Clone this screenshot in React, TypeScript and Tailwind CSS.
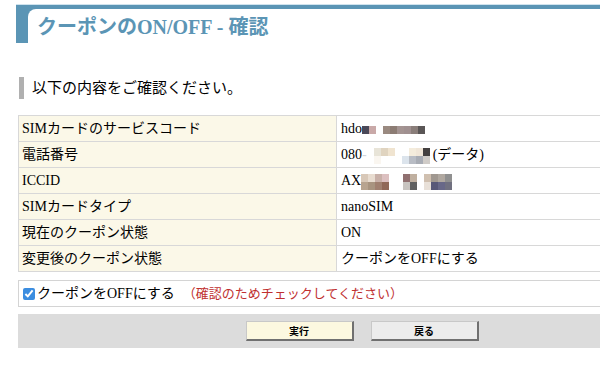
const serif = "font-['Liberation_Serif','Noto_Sans_CJK_JP',serif]";

type Cells = string[][];

function Mosaic({ rows, cell = 7, h = 8 }: { rows: Cells; cell?: number; h?: number }) {
  return (
    <span className="inline-flex flex-col align-middle">
      {rows.map((row, i) => (
        <span key={i} className="flex">
          {row.map((c, j) => (
            <span key={j} style={{ width: cell, height: h, background: c }} />
          ))}
        </span>
      ))}
    </span>
  );
}

const hdoCells: Cells = [
  ["#4a4858", "#c9a9a8", "#ffffff", "#9a8a80", "#8c7c74", "#a49492", "#a09090", "#8a7e7a", "#5a5656"],
];

const phoneCells: Cells = [
  ["#ffffff", "#e8e4d8", "#e0d4c0", "#f0e4d0", "#ffffff", "#ffffff", "#f4ecdc", "#f0e6d8", "#444040"],
  ["#ffffff", "#faf6f0", "#ffffff", "#ffffff", "#ffffff", "#dce4ec", "#b8bcc4", "#a8acb4", "#d0ccc8"],
];

const iccidCells: Cells = [
  ["#d8c8b8", "#e8dcd0", "#c8b0a8", "#dcc0c0", "#ffffff", "#ffffff", "#907070", "#c0b0a0", "#ffffff", "#d0c0b0", "#a09890", "#b0a8a0", "#909090"],
  ["#b8a490", "#a89480", "#a08070", "#906858", "#ffffff", "#ffffff", "#c8c4c0", "#606060", "#ffffff", "#e8e0d8", "#585878", "#686888", "#707080"],
];

const rows: { label: string; value: React.ReactNode }[] = [
  {
    label: "SIMカードのサービスコード",
    value: (
      <>
        hdo
        <Mosaic rows={hdoCells} />
      </>
    ),
  },
  {
    label: "電話番号",
    value: (
      <>
        080<span className="text-gray-300">-</span>
        <Mosaic rows={phoneCells} />
        <span className="ml-[3px]">(データ)</span>
      </>
    ),
  },
  {
    label: "ICCID",
    value: (
      <>
        AX
        <Mosaic rows={iccidCells} />
      </>
    ),
  },
  { label: "SIMカードタイプ", value: "nanoSIM" },
  { label: "現在のクーポン状態", value: "ON" },
  { label: "変更後のクーポン状態", value: "クーポンをOFFにする" },
];

export default function App() {
  return (
    <div className={`w-[600px] h-[376px] overflow-hidden bg-white text-black ${serif}`}>
      <div className="pt-[4px] pl-[16px]">
        <div className="h-[39px] bg-[#5b95b5] pt-[4px] pl-[12px] border-t border-[#cfe3ee]">
          <div className="h-full bg-white rounded-tl-[8px] pl-[9px] pt-[5px]">
            <h1 className="text-[20px] leading-[26px] font-bold text-[#5b95b5]">
              クーポンのON/OFF - 確認
            </h1>
          </div>
        </div>
      </div>

      <div className="w-[706px] pl-[18px] pt-[34px]">
        <h2 className="ml-[1px] border-l-[5px] border-[#b0b0b0] pl-[8px] text-[15px] leading-[22px]">
          以下の内容をご確認ください。
        </h2>

        <table className="mt-[16px] w-full border-collapse text-[14px]">
          <tbody>
            {rows.map((r) => (
              <tr key={r.label} className="h-[26px]">
                <td className="w-[318px] border border-[#d8d8d8] bg-[#fbf8e8] px-[3px] py-0">{r.label}</td>
                <td className="border border-[#d8d8d8] px-[4px] py-0 whitespace-nowrap">{r.value}</td>
              </tr>
            ))}
          </tbody>
        </table>

        <div className="mt-[8px] h-[27px] border border-[#d4d4d4] flex items-center pl-[4px] text-[14px]">
          <input type="checkbox" defaultChecked className="w-[12px] h-[12px] m-0 mr-[2px] accent-[#3b8de0]" />
          <span>クーポンをOFFにする</span>
          <span className="ml-[8px] text-[13px] text-[#c0302f]">（確認のためチェックしてください）</span>
        </div>

        <div className="mt-[7px] h-[34px] bg-[#dcdcdc] flex items-center justify-center gap-[17px] font-['Noto_Sans_CJK_JP',sans-serif]">
          <button className="w-[108px] h-[20px] bg-[#fcf8e0] border border-[#c8c8c8] border-r-[2px] border-b-[2px] border-r-[#707070] border-b-[#707070] text-[10px] font-bold leading-none">
            実行
          </button>
          <button className="w-[108px] h-[20px] bg-[#ececec] border border-[#c8c8c8] border-r-[2px] border-b-[2px] border-r-[#707070] border-b-[#707070] text-[10px] font-bold leading-none">
            戻る
          </button>
        </div>
      </div>
    </div>
  );
}
